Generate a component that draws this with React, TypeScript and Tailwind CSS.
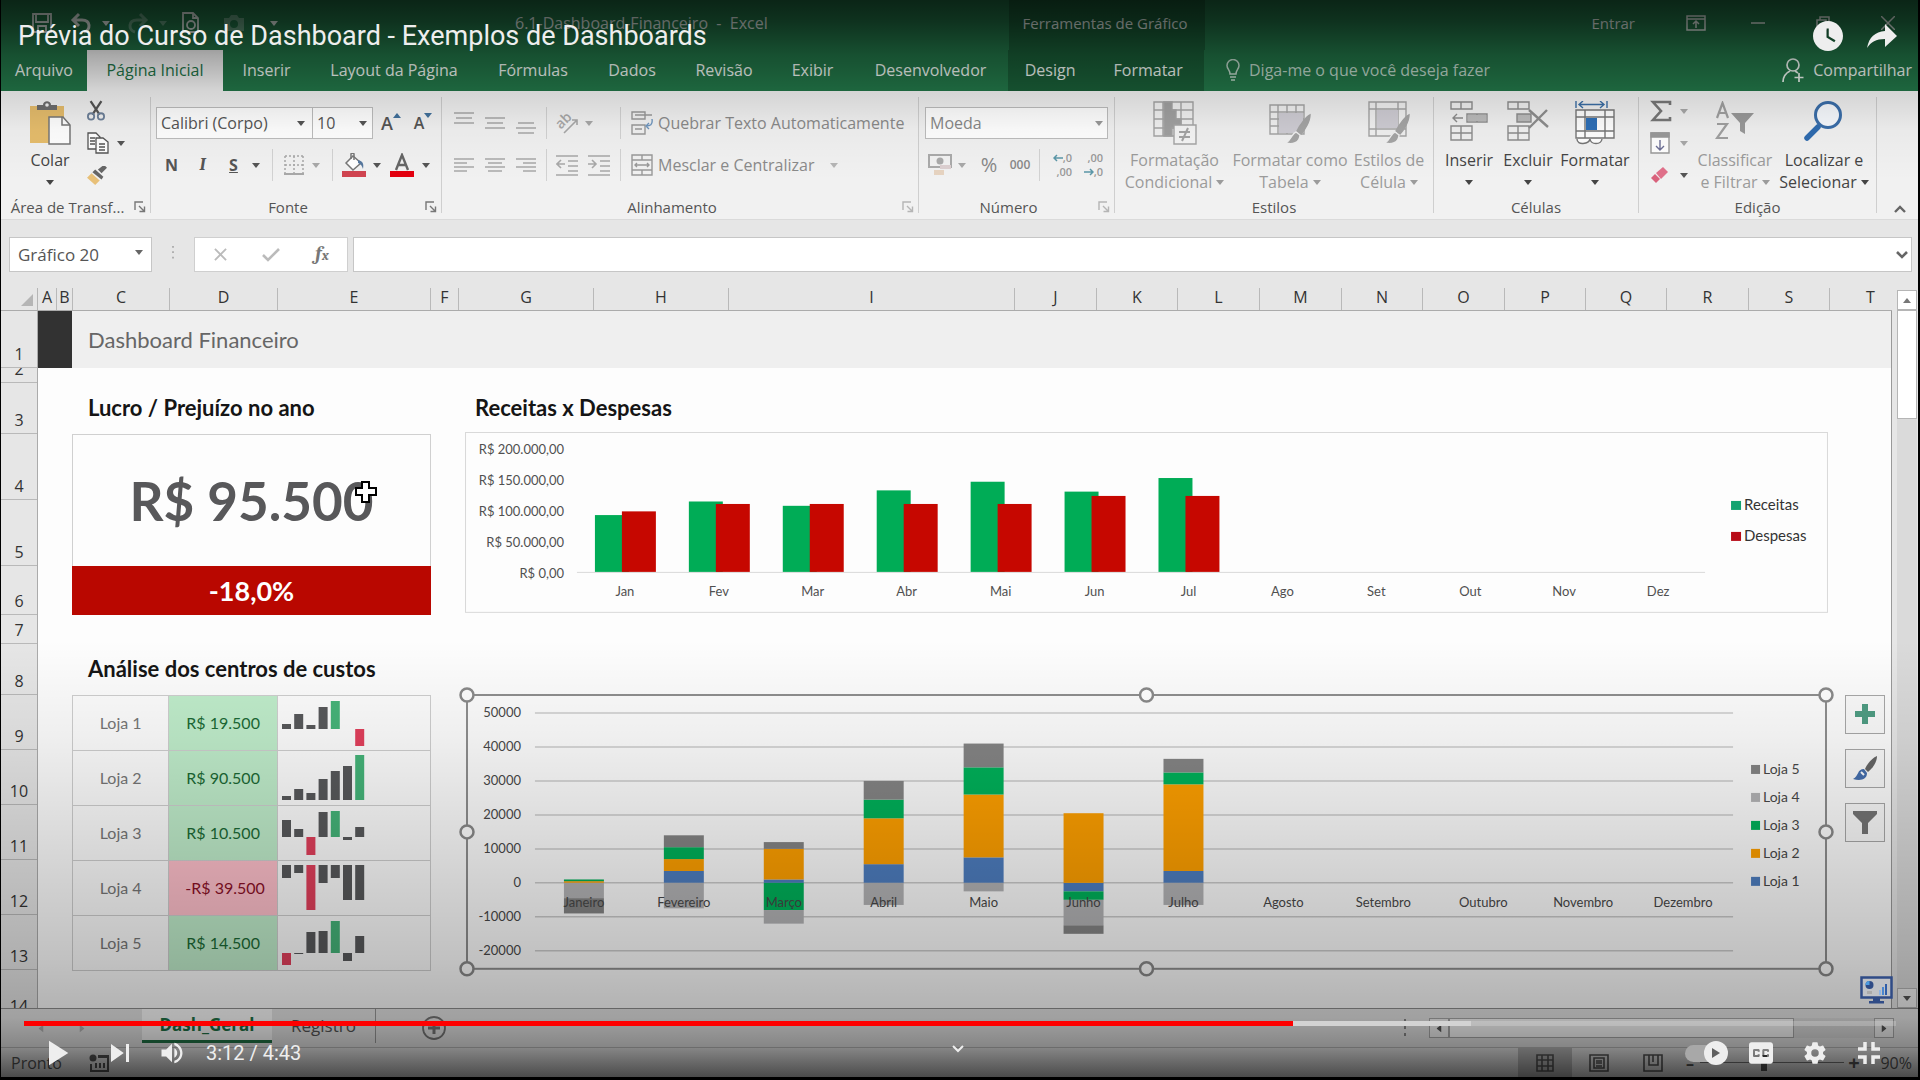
import type { ReactNode } from 'react';
import { IoSettingsSharp } from 'react-icons/io5';
import { MdClosedCaption, MdPlayArrow, MdSkipNext, MdVolumeUp, MdWatchLater } from 'react-icons/md';

const tabs = [
  { name: 'Arquivo', width: 'w-[86px]' },
  { name: 'Página Inicial', width: 'w-[136px]', active: true },
  { name: 'Inserir', width: 'w-[87px]' },
  { name: 'Layout da Página', width: 'w-[168px]' },
  { name: 'Fórmulas', width: 'w-[110px]' },
  { name: 'Dados', width: 'w-[88px]' },
  { name: 'Revisão', width: 'w-[96px]' },
  { name: 'Exibir', width: 'w-[81px]' },
  { name: 'Desenvolvedor', width: 'w-[155px]' },
];

const columns = [
  { name: 'A', width: 'w-[19px]' },
  { name: 'B', width: 'w-[16px]' },
  { name: 'C', width: 'w-[97px]' },
  { name: 'D', width: 'w-[108px]' },
  { name: 'E', width: 'w-[153px]' },
  { name: 'F', width: 'w-[28px]' },
  { name: 'G', width: 'w-[135px]' },
  { name: 'H', width: 'w-[135px]' },
  { name: 'I', width: 'w-[286px]' },
  { name: 'J', width: 'w-[82px]' },
  { name: 'K', width: 'w-[81px]' },
  { name: 'L', width: 'w-[82px]' },
  { name: 'M', width: 'w-[82px]' },
  { name: 'N', width: 'w-[81px]' },
  { name: 'O', width: 'w-[82px]' },
  { name: 'P', width: 'w-[81px]' },
  { name: 'Q', width: 'w-[81px]' },
  { name: 'R', width: 'w-[82px]' },
  { name: 'S', width: 'w-[81px]' },
];

const rows = [
  { n: 1, height: 'h-[57px]' },
  { n: 2, height: 'h-[15px]' },
  { n: 3, height: 'h-[51px]' },
  { n: 4, height: 'h-[66px]' },
  { n: 5, height: 'h-[66px]' },
  { n: 6, height: 'h-[49px]' },
  { n: 7, height: 'h-[29px]' },
  { n: 8, height: 'h-[51px]' },
  { n: 9, height: 'h-[55px]' },
  { n: 10, height: 'h-[55px]' },
  { n: 11, height: 'h-[55px]' },
  { n: 12, height: 'h-[55px]' },
  { n: 13, height: 'h-[55px]' },
];

const stores = [
  { name: 'Loja 1', value: 'R$ 19.500', base: 33, trend: [5, 15, 4, 22, 28, 0, -17] },
  { name: 'Loja 2', value: 'R$ 90.500', base: 49, trend: [4, 11, 7, 21, 29, 34, 45] },
  { name: 'Loja 3', value: 'R$ 10.500', base: 31, trend: [17, 8, -18, 25, 26, -3, 10] },
  { name: 'Loja 4', value: '-R$ 39.500', base: 4, trend: [-13, -8, -45, -18, -13, -35, -35] },
  { name: 'Loja 5', value: 'R$ 14.500', base: 37, trend: [-12, -1, 21, 22, 32, -8, 17] },
];

const shortMonths = ['Jan', 'Fev', 'Mar', 'Abr', 'Mai', 'Jun', 'Jul', 'Ago', 'Set', 'Out', 'Nov', 'Dez'];
const longMonths = ['Janeiro', 'Fevereiro', 'Março', 'Abril', 'Maio', 'Junho', 'Julho', 'Agosto', 'Setembro', 'Outubro', 'Novembro', 'Dezembro'];

// thousands of reais
const income = [92, 114, 107, 132, 146, 130, 152];
const expenses = [98, 110, 110, 110, 110, 123, 123];

const storeColors = ['#4e7ec0', '#ffa000', '#00b25a', '#b4b4b6', '#858585'];
const monthly = [
  [0, 500, 500, -4500, -4500],
  [3500, 3500, 3500, -7500, 3500],
  [1000, 9000, -8000, -4000, 2000],
  [5500, 13500, 5500, -6500, 5500],
  [7500, 18500, 8000, -2500, 7000],
  [-2500, 20500, -2500, -7500, -2500],
  [3500, 25500, 3500, -6500, 4000],
];

function Caret({ className = '' }: { className?: string }) {
  return (
    <svg viewBox="0 0 8 5" className={'w-2 h-[5px] shrink-0 ' + className} fill="currentColor">
      <path d="M0 0h8L4 5z" />
    </svg>
  );
}

function Group({ label, width, launcher, muted, children }: { label: string; width: string; launcher?: boolean; muted?: boolean; children: ReactNode }) {
  return (
    <section className={'flex shrink-0 ' + width}>
      <div className="flex flex-col flex-1 min-w-0">
        <div className="h-[106px] flex">{children}</div>
        <div className="flex items-center h-6 text-[15px]">
          <span className="flex-1 text-center text-[#555] whitespace-nowrap">{label}</span>
          {launcher && (
            <button aria-label={'Opções de ' + label} className={'w-4 ' + (muted ? 'text-[#b5b5b5]' : 'text-[#777]')}>
              <svg viewBox="0 0 12 12" className="w-3 h-3" fill="none" stroke="currentColor" strokeWidth="1.4">
                <path d="M1 9V1h8M5 5l5 5M10.500 5.500v5h-5" />
              </svg>
            </button>
          )}
        </div>
      </div>
      <div className="w-px my-[6px] bg-[#cfcfcf]" />
    </section>
  );
}

function BigButton({ lines, width, muted, caretBelow, icon }: { lines: string[]; width: string; muted?: boolean; caretBelow?: boolean; icon: ReactNode }) {
  return (
    <button className={'flex flex-col items-center shrink-0 pt-2 ' + width + (muted ? ' text-[#9b9b9b]' : ' text-[#444]')}>
      <span className="h-[50px] flex items-start justify-center pt-[2px]">{icon}</span>
      <span className="h-[22px] leading-[22px] whitespace-nowrap">{lines[0]}</span>
      <span className="h-[22px] leading-[22px] flex items-center gap-1 whitespace-nowrap">
        {lines[1]}
        {(caretBelow || lines[1]) && <Caret />}
      </span>
    </button>
  );
}

function Divider({ width }: { width: string }) {
  return <div className={'flex justify-center h-8 shrink-0 ' + width}><div className="w-px bg-[#d2d2d2]" /></div>;
}

function Tool({ label, width, muted, children }: { label: string; width: string; muted?: boolean; children: ReactNode }) {
  return (
    <button aria-label={label} className={'flex items-center justify-center h-8 shrink-0 ' + width + (muted ? ' text-[#a8a8a8]' : ' text-[#555]')}>
      {children}
    </button>
  );
}

function Lines({ d }: { d: string }) {
  return (
    <svg viewBox="0 0 22 22" className="w-[22px] h-[22px]" fill="none" stroke="currentColor" strokeWidth="1.6">
      <path d={d} />
    </svg>
  );
}

function TitleBar() {
  return (
    <div className="flex h-[50px] bg-[#217346] text-[#dfe9e3] text-[15px]">
      <div className="w-[514px] flex items-center h-[46px] pl-[30px] gap-[13px]">
        <svg viewBox="0 0 22 22" className="w-[22px] h-[22px]" fill="none" stroke="currentColor" strokeWidth="1.8"><path d="M2 2h18v18H2zM5 2v8h12V2M7 20v-6h8v6" /></svg>
        <div className="flex items-center gap-[10px] ml-1">
          <svg viewBox="0 0 22 22" className="w-[22px] h-[22px]" fill="none" stroke="currentColor" strokeWidth="3"><path d="M9 2L3 8l6 6M3 8h9c9 0 9 10 2 12" /></svg>
          <Caret />
        </div>
        <div className="flex items-center gap-[10px] opacity-35 ml-1">
          <svg viewBox="0 0 22 22" className="w-[22px] h-[22px]" fill="none" stroke="currentColor" strokeWidth="3"><path d="M13 2l6 6-6 6M19 8h-9C1 8 1 18 8 20" /></svg>
          <Caret />
        </div>
        <svg viewBox="0 0 22 22" className="w-[22px] h-[22px] mr-1" fill="none" stroke="currentColor" strokeWidth="1.8"><path d="M3 20V1h10l5 5v14zM13 1v5h5" /><circle cx="11" cy="13" r="4" /></svg>
        <svg viewBox="0 0 22 18" className="w-[22px] h-[18px] ml-1 opacity-35" fill="currentColor"><path d="M1 4h5l2-3h6l2 3h5v13H1zM11 6a4 4 0 100 8 4 4 0 000-8z" fillRule="evenodd" /></svg>
        <Caret className="ml-3" />
      </div>
      <div className="flex-1 flex items-center h-[46px] text-base whitespace-nowrap">6.1-Dashboard-Financeiro&nbsp; - &nbsp;Excel</div>
      <div className="w-[196px] bg-[#185a35] flex items-center justify-center h-[50px] pb-1 pr-1">Ferramentas de Gráfico</div>
      <div className="w-[713px] flex items-center justify-end h-[46px] pr-[23px]">
        <button className="mr-[51px]">Entrar</button>
        <button aria-label="Opções da faixa" className="w-[65px]"><svg viewBox="0 0 20 16" className="w-5 h-4" fill="none" stroke="currentColor" strokeWidth="1.5"><path d="M1 1h18v14H1zM1 4h18M10 13V7M7 9l3-3 3 3" /></svg></button>
        <button aria-label="Minimizar" className="w-[65px]"><svg viewBox="0 0 14 14" className="w-[14px] h-[14px]" stroke="currentColor" strokeWidth="1.5"><path d="M0 7h14" /></svg></button>
        <button aria-label="Restaurar" className="w-[65px]"><svg viewBox="0 0 14 14" className="w-[14px] h-[14px]" fill="none" stroke="currentColor" strokeWidth="1.5"><path d="M1 4h9v9H1zM4 4V1h9v9h-3" /></svg></button>
        <button aria-label="Fechar"><svg viewBox="0 0 14 14" className="w-[14px] h-[14px]" stroke="currentColor" strokeWidth="1.5"><path d="M0 0l14 14M14 0L0 14" /></svg></button>
      </div>
    </div>
  );
}

function TabBar() {
  return (
    <div className="flex h-[41px] bg-[#217346] text-[#e9f1ec]">
      {tabs.map(t => (
        <button key={t.name} className={'h-full pb-[2px] whitespace-nowrap shrink-0 ' + t.width + (t.active ? ' bg-[#f1f1f1] text-[#217346]' : '')}>{t.name}</button>
      ))}
      <div className="flex w-[196px] pb-[2px] bg-[#185a35] shrink-0">
        <button className="w-[86px]">Design</button>
        <button className="w-[114px]">Formatar</button>
      </div>
      <label className="flex items-center flex-1 pl-[22px] pb-[2px] gap-[9px] text-[#b9d2c4]">
        <svg viewBox="0 0 14 22" className="w-[14px] h-[22px]" fill="none" stroke="currentColor" strokeWidth="1.5"><path d="M4 15c0-4-3-5-3-8.500a6 6 0 0112 0C13 10 10 11 10 15zM4 18h6M5 21h4" /></svg>
        <input placeholder="Diga-me o que você deseja fazer" className="flex-1 bg-transparent outline-none placeholder:text-[#b9d2c4]" />
      </label>
      <button className="flex items-center gap-[9px] pr-[6px] pb-[2px]">
        <svg viewBox="0 0 22 26" className="w-[22px] h-[26px]" fill="none" stroke="currentColor" strokeWidth="1.7"><circle cx="11" cy="8" r="6" /><path d="M1 25c0-6 3-9 7-11M13 14l3 2M17 16v9M12.500 20.500h9" /></svg>
        Compartilhar
      </button>
    </div>
  );
}

const brush = (
  <g>
    <path d="M42 14c-4 2-11 11-13 16l4 3c4-4 9-13 9-19z" fill="#a5a5a5" />
    <path d="M28 31c-4 1-4 7-10 11 6 2 14 0 14-8z" fill="#a5a5a5" stroke="#f1f1f1" />
  </g>
);

function Ribbon() {
  return (
    <div className="flex h-[129px] bg-[#f1f1f1] border-b border-[#dadada]">
      <Group label="Área de Transf..." width="w-[150px]" launcher>
        <div className="pl-3">
          <BigButton
            lines={['Colar', '']}
            width="w-[74px]"
            caretBelow
            icon={
              <svg viewBox="0 0 42 44" className="w-[42px] h-11">
                <path d="M1 5h34v37H1z" fill="#e6bd6c" />
                <path d="M8 9V4h6c0-5 8-5 8 0h6v5z" fill="#6d6d6d" />
                <circle cx="18" cy="4" r="1.800" fill="#f1f1f1" />
                <path d="M20 16h14l7 8v19H20z" fill="#fff" stroke="#777" strokeWidth="1.500" />
                <path d="M33 16v8h8" fill="none" stroke="#777" strokeWidth="1.500" />
              </svg>
            }
          />
        </div>
        <div className="flex flex-col pt-1">
          <Tool label="Recortar" width="w-[18px]">
            <svg viewBox="0 0 20 24" className="w-5 h-6" fill="none" stroke="currentColor" strokeWidth="2"><path d="M4 1l10 15M16 1L6 16" strokeWidth="2.500" /><circle cx="4.500" cy="18" r="3.500" stroke="#6d8099" /><circle cx="15.500" cy="18" r="3.500" stroke="#6d8099" /></svg>
          </Tool>
          <Tool label="Copiar" width="w-[38px]">
            <svg viewBox="0 0 22 22" className="w-[22px] h-[22px] mr-2" fill="#fff" stroke="currentColor" strokeWidth="1.300"><path d="M1 1h8l4 4v12H1zM3 6h5M3 9h5M3 12h5" /><path d="M9 6h7l5 4v11H9zM12 12h6M12 15h6M12 18h6" /></svg>
            <Caret />
          </Tool>
          <Tool label="Pincel de formatação" width="w-[20px]">
            <svg viewBox="0 0 22 22" className="w-[22px] h-[22px]"><path d="M20 1l2 2-6 6-4-4 5-4z" fill="#666" /><path d="M9 5l9 8-2 3L6 8z" fill="#666" /><path d="M5 9l9 8-5 5-9-8z" fill="#e8c078" /></svg>
          </Tool>
        </div>
      </Group>

      <Group label="Fonte" width="w-[291px]" launcher>
        <div className="flex flex-col pl-[5px] pt-4 gap-[10px]">
          <div className="flex">
            <span className="relative flex items-center">
              <select aria-label="Fonte" className="appearance-none w-[157px] h-8 bg-white border border-[#bdbdbd] pl-1 text-[#555]"><option>Calibri (Corpo)</option></select>
              <Caret className="absolute right-2 text-[#555]" />
            </span>
            <span className="relative flex items-center">
              <select aria-label="Tamanho da fonte" className="appearance-none w-[60px] h-8 bg-white border border-l-0 border-[#bdbdbd] pl-1 text-[#555]"><option>10</option></select>
              <Caret className="absolute right-[6px] text-[#555]" />
            </span>
            <Tool label="Aumentar fonte" width="w-[36px]"><span className="text-lg font-semibold">A</span><Caret className="rotate-180 mb-4 text-[#41719c]" /></Tool>
            <Tool label="Diminuir fonte" width="w-[28px]"><span className="text-base font-semibold">A</span><Caret className="mb-4 text-[#41719c]" /></Tool>
          </div>
          <div className="flex">
            <Tool label="Negrito" width="w-[31px]"><b>N</b></Tool>
            <Tool label="Itálico" width="w-[31px]"><i className="font-serif font-bold text-lg">I</i></Tool>
            <Tool label="Sublinhado" width="w-[31px]"><b className="underline">S</b></Tool>
            <Tool label="Tipo de sublinhado" width="w-[14px]"><Caret /></Tool>
            <Divider width="w-[18px]" />
            <Tool label="Bordas" width="w-[26px]" muted>
              <svg viewBox="0 0 20 20" className="w-5 h-5" fill="none" stroke="currentColor" strokeWidth="1.500"><path d="M1 1h18M1 1v18M19 1v18M10 1v18M1 10h18" strokeDasharray="2 2" /><path d="M0 19h20" strokeWidth="2" /></svg>
            </Tool>
            <Tool label="Tipo de borda" width="w-[18px]" muted><Caret /></Tool>
            <Divider width="w-[14px]" />
            <Tool label="Cor de preenchimento" width="w-[30px]">
              <svg viewBox="0 0 24 24" className="w-6 h-6"><path d="M4 10l7-7 8 7-8 7z" fill="#fff" stroke="#777" strokeWidth="1.500" /><path d="M9 6V1c0-1 3-1 3 0v6" fill="none" stroke="#777" strokeWidth="1.500" /><path d="M16 7c5 1 6 4 5 9-1-3-2-5-5-6z" fill="#56779e" /><path d="M0 18h24v6H0z" fill="#d04450" /></svg>
            </Tool>
            <Tool label="Cores de preenchimento" width="w-[16px]"><Caret /></Tool>
            <Tool label="Cor da fonte" width="w-[33px]">
              <svg viewBox="0 0 24 24" className="w-6 h-6"><path d="M6 17l6-15 6 15M8 12h8" fill="none" stroke="#666" strokeWidth="2.400" /><path d="M0 18h24v6H0z" fill="#e3000f" /></svg>
            </Tool>
            <Tool label="Cores da fonte" width="w-[16px]"><Caret /></Tool>
          </div>
        </div>
      </Group>

      <Group label="Alinhamento" width="w-[477px]" launcher muted>
        <div className="flex flex-col pl-[6px] pt-4 gap-[10px]">
          <div className="flex">
            <Tool label="Alinhar acima" width="w-[31px]" muted><Lines d="M1 1h20M3 6h16M1 11h20" /></Tool>
            <Tool label="Alinhar no meio" width="w-[31px]" muted><Lines d="M1 6h20M3 11h16M1 16h20" /></Tool>
            <Tool label="Alinhar abaixo" width="w-[31px]" muted><Lines d="M3 11h16M1 16h20M3 21h16" /></Tool>
            <Divider width="w-[10px]" />
            <Tool label="Orientação" width="w-[31px]" muted>
              <svg viewBox="0 0 24 24" className="w-6 h-6 overflow-visible"><text x="9" y="14" fontSize="14" fontWeight="600" fill="currentColor" textAnchor="middle" transform="rotate(-45 9 10)">ab</text><path d="M9 22L22 9M17 9h5v5" fill="none" stroke="currentColor" strokeWidth="1.600" /></svg>
            </Tool>
            <Tool label="Opções de orientação" width="w-[14px]" muted><Caret /></Tool>
            <div className="w-[19px]" />
            <Divider width="w-[10px]" />
            <button className="flex items-center h-8 pl-[6px] gap-[5px] text-[#8a8a8a] whitespace-nowrap">
              <svg viewBox="0 0 22 24" className="w-[22px] h-6" fill="none" stroke="#999" strokeWidth="1.400"><path d="M1 1h13v7H1zM1 14h13v9H1zM4 18h7M4 4h17" /><path d="M21 8c1 6-2 7-6 7M18 12l-3 3 3 3" stroke="#6f96bf" /></svg>
              Quebrar Texto Automaticamente
            </button>
          </div>
          <div className="flex">
            <Tool label="Alinhar à esquerda" width="w-[31px]" muted><Lines d="M1 5h20M1 9h13M1 13h20M1 17h13" /></Tool>
            <Tool label="Centralizar" width="w-[31px]" muted><Lines d="M1 5h20M4 9h14M1 13h20M4 17h14" /></Tool>
            <Tool label="Alinhar à direita" width="w-[31px]" muted><Lines d="M1 5h20M8 9h13M1 13h20M8 17h13" /></Tool>
            <Divider width="w-[10px]" />
            <Tool label="Diminuir recuo" width="w-[32px]" muted><Lines d="M0 2h22M12 7h10M12 12h10M12 17h10M0 21h22M9 10H1M5 6l-4 4 4 4" /></Tool>
            <Tool label="Aumentar recuo" width="w-[32px]" muted><Lines d="M0 2h22M12 7h10M12 12h10M12 17h10M0 21h22M0 10h8M4 6l4 4-4 4" /></Tool>
            <Divider width="w-[10px]" />
            <button className="flex items-center h-8 pl-[6px] gap-[5px] text-[#8a8a8a] whitespace-nowrap">
              <svg viewBox="0 0 22 22" className="w-[22px] h-[22px]" fill="none" stroke="#999" strokeWidth="1.400"><path d="M1 1h20v20H1zM1 6h20M1 16h20M11 1v5M11 16v5M4 11h14M6 9l-2 2 2 2M16 9l2 2-2 2" /></svg>
              Mesclar e Centralizar
              <Caret className="ml-[11px] text-[#b5b5b5]" />
            </button>
          </div>
        </div>
      </Group>

      <Group label="Número" width="w-[196px]" launcher muted>
        <div className="flex flex-col pl-[6px] pt-4 gap-[10px]">
          <span className="relative flex items-center">
            <select aria-label="Formato de número" className="appearance-none w-[183px] h-8 bg-white border border-[#bdbdbd] pl-1 text-[#888]"><option>Moeda</option></select>
            <Caret className="absolute right-[6px] text-[#999]" />
          </span>
          <div className="flex">
            <Tool label="Formato de contabilização" width="w-[30px]" muted>
              <svg viewBox="0 0 24 24" className="w-6 h-6"><path d="M1 2h22v12H1z" fill="none" stroke="#aaa" strokeWidth="2" /><circle cx="12" cy="8" r="3.500" fill="#aaa" /><path d="M12 12h11v4H12z" fill="#dccfd0" /><path d="M6 17h10v5H6z" fill="#e6d3c0" /></svg>
            </Tool>
            <Tool label="Moedas" width="w-[14px]" muted><Caret /></Tool>
            <Tool label="Porcentagem" width="w-[40px]" muted><span className="text-xl text-[#888]">%</span></Tool>
            <Tool label="Separador de milhares" width="w-[22px]" muted><span className="text-xs font-semibold text-[#888]">000</span></Tool>
            <Divider width="w-[16px]" />
            <Tool label="Aumentar casas" width="w-[31px]" muted>
              <span className="flex flex-col items-end text-[11px] leading-[14px] font-semibold text-[#999]">
                <span className="flex items-center"><svg viewBox="0 0 10 8" className="w-[10px] h-2" fill="none" stroke="#5b97a8" strokeWidth="1.500"><path d="M10 4H1M4 1L1 4l3 3" /></svg>,0</span>
                <span>,00</span>
              </span>
            </Tool>
            <Tool label="Diminuir casas" width="w-[31px]" muted>
              <span className="flex flex-col items-end text-[11px] leading-[14px] font-semibold text-[#999]">
                <span>,00</span>
                <span className="flex items-center"><svg viewBox="0 0 10 8" className="w-[10px] h-2" fill="none" stroke="#5b97a8" strokeWidth="1.500"><path d="M0 4h9M6 1l3 3-3 3" /></svg>,0</span>
              </span>
            </Tool>
          </div>
        </div>
      </Group>

      <Group label="Estilos" width="w-[319px]">
        <BigButton
          lines={['Formatação', 'Condicional']}
          width="w-[119px]"
          muted
          icon={
            <svg viewBox="0 0 44 44" className="w-11 h-11" fill="none" stroke="#a5a5a5" strokeWidth="1.400">
              <path d="M1 1h39v34H1zM1 9h39M1 18h39M1 27h39M10 1v34M28 1v34" />
              <path d="M11 1h8v8h4v9h5v9h-9v8h-8z" fill="#a0a0a0" />
              <path d="M21 24h22v19H21z" fill="#f5f5f5" /><path d="M26 31h11M26 36h11M35 27l-6 13" strokeWidth="2" />
            </svg>
          }
        />
        <BigButton
          lines={['Formatar como', 'Tabela']}
          width="w-[112px]"
          muted
          icon={
            <svg viewBox="0 0 44 44" className="w-11 h-11" fill="none" stroke="#a5a5a5" strokeWidth="1.400">
              <path d="M2 4h34v29H2zM2 11h34M2 18h34M2 25h34M10 4v29M19 4v29M28 4v29" />
              <path d="M11 12h24v20H11z" fill="#cfcdd4" stroke="none" />
              {brush}
            </svg>
          }
        />
        <BigButton
          lines={['Estilos de', 'Célula']}
          width="w-[86px]"
          muted
          icon={
            <svg viewBox="0 0 44 44" className="w-11 h-11" fill="none" stroke="#a5a5a5" strokeWidth="1.400">
              <path d="M2 1h37v34H2zM2 8h37M2 28h37M9 1v34M31 1v34" />
              <path d="M10 9h21v18H10z" fill="#cfcdd4" stroke="none" />
              {brush}
            </svg>
          }
        />
      </Group>

      <Group label="Células" width="w-[205px]">
        <div className="flex pl-[5px]">
          <BigButton
            lines={['Inserir', '']}
            width="w-[60px]"
            caretBelow
            icon={
              <svg viewBox="0 0 38 40" className="w-[38px] h-10" fill="none" stroke="#8d8d8d" strokeWidth="1.400">
                <path d="M1 1h21v7H1zM11 1v7M17 13h20v8H17zM27 13v8M1 25h21v14H1zM1 32h21M11 25v14M13 17H3M7 13l-4 4 4 4" />
                <path d="M18 14h18v6H18z" fill="#bbb" stroke="none" />
              </svg>
            }
          />
          <BigButton
            lines={['Excluir', '']}
            width="w-[58px]"
            caretBelow
            icon={
              <svg viewBox="0 0 42 40" className="w-[42px] h-10" fill="none" stroke="#8d8d8d" strokeWidth="1.400">
                <path d="M1 1h21v7H1zM11 1v7M1 25h21v14H1zM1 32h21M11 25v14" />
                <path d="M10 13h14v8H10z" fill="#bbb" />
                <path d="M22 9l19 17M40 9L22 27" strokeWidth="2.400" />
              </svg>
            }
          />
          <BigButton
            lines={['Formatar', '']}
            width="w-[76px]"
            caretBelow
            icon={
              <svg viewBox="0 0 42 44" className="w-[42px] h-11" fill="none" stroke="#777" strokeWidth="1.400">
                <path d="M2 9h38v28H2zM2 16h38M2 30h38M11 9v28M31 9v28" fill="#fff" />
                <path d="M12 17h11v12H12z" fill="#2e6fb7" stroke="none" />
                <path d="M2 0v7M33 0v7M5 3.500h25M9 0L5 3.500 9 7M26 0l4 3.500L26 7" stroke="#3b6ea5" />
                <path d="M3 38c0 7 12 5 13 0 1 6 11 6 12 0" fill="#fff" />
              </svg>
            }
          />
        </div>
      </Group>

      <Group label="Edição" width="w-[238px]">
        <div className="flex flex-col pl-2 pt-1 w-[54px] shrink-0">
          <Tool label="AutoSoma" width="w-[44px]">
            <svg viewBox="0 0 22 22" className="w-[22px] h-[22px] mr-2" fill="none" stroke="#777" strokeWidth="2.600"><path d="M20 5V2H3l8 9-8 9h17v-3" /></svg>
            <Caret className="text-[#a8a8a8]" />
          </Tool>
          <Tool label="Preencher" width="w-[44px]" muted>
            <svg viewBox="0 0 20 22" className="w-5 h-[22px] mr-[10px]" fill="#fff" stroke="#999" strokeWidth="1.400"><path d="M1 1h18v20H1z" /><path d="M1 1h18v4H1z" fill="#999" /><path d="M10 8v10M6 14l4 4 4-4" stroke="#6d6f96" fill="none" /></svg>
            <Caret />
          </Tool>
          <Tool label="Limpar" width="w-[44px]">
            <svg viewBox="0 0 18 18" className="w-[18px] h-[18px] mr-[11px]"><path d="M5 7l7-6 5 5-7 7z" fill="#e0708a" /><path d="M4 8l5 5-4 4-5-5z" fill="#d9627c" /></svg>
            <Caret />
          </Tool>
        </div>
        <BigButton
          lines={['Classificar', 'e Filtrar']}
          width="w-[84px]"
          muted
          icon={
            <svg viewBox="0 0 40 42" className="w-10 h-[42px]">
              <path d="M2 17L7.500 2 13 17M4 12h7M2 23h10L2 37h11" fill="none" stroke="#a0a0a0" strokeWidth="2.200" />
              <path d="M16 12h23l-9 10v11l-5-3V22z" fill="#999" />
            </svg>
          }
        />
        <BigButton
          lines={['Localizar e', 'Selecionar']}
          width="w-[94px]"
          icon={
            <svg viewBox="0 0 40 40" className="w-10 h-10"><path d="M14 26L3 37" stroke="#2f6cb0" strokeWidth="5.500" strokeLinecap="round" /><circle cx="24" cy="14" r="12.500" fill="#f8fbff" stroke="#3a6eaa" strokeWidth="3" /></svg>
          }
        />
      </Group>
      <button aria-label="Recolher faixa" className="flex flex-1 items-end justify-center pb-[6px] pl-1 text-[#666]">
        <svg viewBox="0 0 12 8" className="w-3 h-2" fill="none" stroke="currentColor" strokeWidth="2.400"><path d="M1 7l5-5 5 5" /></svg>
      </button>
    </div>
  );
}

function FormulaBar() {
  return (
    <div className="flex pt-[17px] pl-2 pr-[6px] h-[52px]">
      <span className="relative flex items-center">
        <input aria-label="Caixa de nome" defaultValue="Gráfico 20" className="w-[143px] h-[35px] bg-white border border-[#c6c6c6] pl-2 text-[17px] text-[#555]" />
        <Caret className="absolute right-2 mb-1 w-[10px] text-[#666]" />
      </span>
      <svg viewBox="0 0 4 20" className="w-[42px] h-[18px] mt-2" fill="#aaa"><path d="M1 1h2v2H1zM1 7h2v2H1zM1 13h2v2H1z" /></svg>
      <div className="flex items-center w-[154px] h-[35px] bg-white border border-[#cfcfcf] mr-[5px]">
        <button aria-label="Cancelar" className="w-[50px] flex justify-center"><svg viewBox="0 0 14 14" className="w-[15px] h-[13px]" stroke="#bbb" strokeWidth="2"><path d="M1 1l12 12M13 1L1 13" /></svg></button>
        <button aria-label="Inserir" className="w-[52px] flex justify-center"><svg viewBox="0 0 18 14" className="w-[18px] h-[14px]" fill="none" stroke="#bbb" strokeWidth="2.600"><path d="M1 7l5 5L17 1" /></svg></button>
        <button aria-label="Inserir função" className="w-[50px] text-[#777] font-serif italic font-bold text-xl leading-5">f<span className="text-sm">x</span></button>
      </div>
      <span className="relative flex flex-1 items-center">
        <input aria-label="Barra de fórmulas" className="w-full h-[35px] bg-white border border-[#c6c6c6]" />
        <svg viewBox="0 0 12 8" className="absolute right-1 w-3 h-2" fill="none" stroke="#666" strokeWidth="2.600"><path d="M1 1l5 5 5-5" /></svg>
      </span>
    </div>
  );
}

function IncomeChart() {
  const y = (v: number) => 140 - v * 0.618;
  return (
    <svg viewBox="0 0 1364 181" className="w-full h-auto block" fontSize="13" fill="#505050">
      <rect x="0.5" y="0.5" width="1363" height="180" fill="#fdfdfd" stroke="#d9d9d9" />
      {['200.000,00', '150.000,00', '100.000,00', '50.000,00', '0,00'].map((v, i) => (
        <text key={v} x="99" y={22 + i * 31} textAnchor="end">R$ {v}</text>
      ))}
      <path d="M112 140.500H1241" stroke="#d9d9d9" />
      {shortMonths.map((m, i) => (
        <g key={m}>
          {income[i] && <rect x={130 + i * 94} y={y(income[i])} width="34" height={140 - y(income[i])} fill="#00ac56" />}
          {expenses[i] && <rect x={157 + i * 94} y={y(expenses[i])} width="34" height={140 - y(expenses[i])} fill="#c60700" />}
          <text x={160 + i * 94} y="164" textAnchor="middle">{m}</text>
        </g>
      ))}
      <rect x="1267" y="69" width="10" height="9" fill="#12a370" />
      <text x="1280" y="78" fontSize="15" fill="#333">Receitas</text>
      <rect x="1267" y="100" width="10" height="9" fill="#b80c18" />
      <text x="1280" y="109" fontSize="15" fill="#333">Despesas</text>
    </svg>
  );
}

function StoresChart() {
  const scale = 34 / 10000;
  const bars = monthly.flatMap((values, m) => {
    let up = 188;
    let down = 188;
    return values.map((v, s) => {
      const h = Math.abs(v) * scale;
      if (v >= 0) up -= h;
      const top = v >= 0 ? up : down;
      if (v < 0) down += h;
      return <rect key={m + '-' + s} x={97 + m * 100} y={top} width="40" height={h} fill={storeColors[s]} />;
    });
  });
  return (
    <svg viewBox="0 0 1360 274" className="w-full h-auto block overflow-visible" fontSize="13" fill="#484848">
      <rect x="0" y="0" width="1360" height="274" fill="none" stroke="#8f8f8f" strokeWidth="2" />
      {[50000, 40000, 30000, 20000, 10000, 0, -10000, -20000].map((v, i) => (
        <g key={v}>
          <path d={`M68 ${18 + i * 34}H1267`} stroke="#cccccc" strokeWidth="1.500" />
          <text x="54" y={22 + i * 34} textAnchor="end">{v}</text>
        </g>
      ))}
      {bars}
      {longMonths.map((m, i) => <text key={m} x={117 + i * 100} y="212" textAnchor="middle">{m}</text>)}
      {[5, 4, 3, 2, 1].map((n, i) => (
        <g key={n}>
          <rect x="1285" y={70 + i * 28} width="9" height="9" fill={storeColors[n - 1]} />
          <text x="1297" y={79 + i * 28} fontSize="14">Loja {n}</text>
        </g>
      ))}
      {[[0, 0], [680, 0], [1360, 0], [0, 137], [1360, 137], [0, 274], [680, 274], [1360, 274]].map(([x, y]) => (
        <circle key={x + '-' + y} cx={x} cy={y} r="6.500" fill="#fff" stroke="#8a8a8a" strokeWidth="2.500" />
      ))}
    </svg>
  );
}

function Sparkline({ base, trend }: { base: number; trend: number[] }) {
  const max = Math.max(...trend);
  const min = Math.min(...trend);
  return (
    <svg viewBox="0 0 152 54" className="w-[152px] h-[54px] block">
      {trend.map((v, i) => {
        let fill = '#58595b';
        if (v === max && max > 0) fill = '#45b479';
        if (v === min && min < 0) fill = '#e2405c';
        return <rect key={i} x={4 + i * 12.2} y={v > 0 ? base - v : base} width="9" height={Math.abs(v)} fill={fill} />;
      })}
    </svg>
  );
}

function StoreTable() {
  return (
    <table className="w-[359px] border-collapse text-base text-[#777]">
      <tbody>
        {stores.map(s => {
          const negative = s.value.startsWith('-');
          return (
            <tr key={s.name} className="h-[55px]">
              <th scope="row" className="w-[97px] font-normal border border-[#cfcfcf] p-0">{s.name}</th>
              <td className={'w-[109px] text-center whitespace-nowrap border border-[#cfcfcf] p-0 ' + (negative ? 'bg-[#ffc0cb] text-[#8c1028] pl-1' : 'bg-[#c0edcb] text-[#1b6a35]')}>{s.value}</td>
              <td className="border border-[#cfcfcf] p-0"><Sparkline base={s.base} trend={s.trend} /></td>
            </tr>
          );
        })}
      </tbody>
    </table>
  );
}

function ChartButton({ label, children }: { label: string; children: ReactNode }) {
  return <button aria-label={label} className="flex items-center justify-center w-10 h-[39px] border border-[#a8a8a8] bg-[#fafafa]">{children}</button>;
}

function Sheet() {
  return (
    <div className="flex flex-1 min-h-0">
      <div className="flex flex-col flex-1 min-w-0">
        <div className="flex h-[39px] pt-4 border-b border-[#ababab] text-[#333] shrink-0">
          <div className="w-[37px] flex justify-end items-end pr-1 pb-1 border-r border-[#b5b5b5] shrink-0">
            <svg viewBox="0 0 12 12" className="w-3 h-3" fill="#b5b5b5"><path d="M12 0v12H0z" /></svg>
          </div>
          {columns.map(c => <div key={c.name} className={'text-center leading-[18px] border-r border-[#b9b9b9] shrink-0 ' + c.width}>{c.name}</div>)}
          <div className="flex-1 pl-[36px] leading-[18px]">T</div>
        </div>
        <div className="flex flex-1 min-h-0 overflow-hidden">
          <div className="w-[37px] shrink-0 border-r border-[#ababab] text-[#333]">
            {rows.map(r => <div key={r.n} className={'flex items-end justify-center border-b border-[#b9b9b9] overflow-hidden leading-[26px] ' + r.height}>{r.n}</div>)}
            <div className="text-center pt-6">14</div>
          </div>
          <div className="flex-1 min-w-0 bg-[#fdfdfd] font-['Lato',sans-serif] border-r border-[#999] overflow-hidden">
            <div className="flex h-[57px] bg-[#efefef]">
              <div className="w-[34px] bg-[#323232]" />
              <h1 className="pl-4 text-[22px] leading-[57px] text-[#666]">Dashboard Financeiro</h1>
            </div>
            <div className="flex pl-[34px] pr-[6px]">
              <div className="w-[359px] mr-[34px] shrink-0">
                <h2 className="h-[66px] pt-[26px] pl-4 text-[22px] leading-7 font-bold text-[#151515]">Lucro / Prejuízo no ano</h2>
                <div className="relative flex items-center justify-center h-[132px] border border-b-0 border-[#d0d0d0] text-[53px] font-bold text-[#58585a]">
                  R$ 95.500
                  <svg viewBox="0 0 22 22" className="absolute top-[46px] left-[282px] w-[22px] h-[22px]"><path d="M7 1h7v6h7v7h-7v7H7v-7H1V7h6z" fill="#fff" stroke="#000" strokeWidth="2" /></svg>
                </div>
                <div className="h-[49px] bg-[#b90700] text-white text-[27px] font-bold leading-[49px] text-center">-18,0%</div>
                <h2 className="h-[80px] pt-[40px] pl-4 text-[22px] leading-7 font-bold text-[#151515]">Análise dos centros de custos</h2>
                <StoreTable />
              </div>
              <div className="flex-1 min-w-0">
                <h2 className="h-[64px] pt-[26px] pl-[10px] text-[22px] leading-7 font-bold text-[#151515]">Receitas x Despesas</h2>
                <div className="pr-[57px]"><IncomeChart /></div>
                <div className="flex gap-[19px] pt-[82px] pl-[2px]">
                  <div className="flex-1 min-w-0"><StoresChart /></div>
                  <div className="flex flex-col gap-[15px]">
                    <ChartButton label="Elementos do gráfico"><svg viewBox="0 0 20 20" className="w-5 h-5" fill="#4f9d83"><path d="M7 0h6v7h7v6h-7v7H7v-7H0V7h7z" /></svg></ChartButton>
                    <ChartButton label="Estilos do gráfico"><svg viewBox="0 0 26 26" className="w-[26px] h-[26px]"><path d="M25 1C20 3 15 9 13 14l3 3c5-4 9-10 9-16z" fill="#666" /><path d="M12 14c-7 0-5 7-11 10 7 2 14 1 14-6z" fill="#456fae" /><path d="M9 17l3 3" stroke="#fff" strokeWidth="2" /></svg></ChartButton>
                    <ChartButton label="Filtros do gráfico"><svg viewBox="0 0 24 24" className="w-6 h-6" fill="#757575"><path d="M0 1h24v3l-9 9v11h-6V13L0 4z" /></svg></ChartButton>
                  </div>
                </div>
              </div>
            </div>
          </div>
        </div>
      </div>
      <div className="w-[26px] flex flex-col items-start pt-[18px] pl-[5px] shrink-0">
        <button aria-label="Rolar para cima" className="w-5 h-5 bg-white border border-[#b5b5b5] flex items-center justify-center text-[#777]"><Caret className="rotate-180" /></button>
        <div className="w-5 flex-1 bg-[#dadada]"><div className="h-[109px] bg-white border border-[#b5b5b5]" /></div>
        <button aria-label="Rolar para baixo" className="w-5 h-5 bg-[#f1f1f1] border border-[#b5b5b5] flex items-center justify-center text-[#555]"><Caret /></button>
      </div>
    </div>
  );
}

function SheetTabs() {
  return (
    <div className="flex h-[39px] border-t border-[#8e8e8e] text-[17px] shrink-0">
      <div className="flex items-center w-[141px] pl-9 gap-[33px] text-[#b5b5b5]"><Caret className="rotate-90" /><Caret className="-rotate-90" /></div>
      <button className="w-[130px] h-[34px] bg-[#fdfdfd] border-b-[3px] border-[#217346] font-bold text-[#217346]">Dash_Geral</button>
      <button className="w-[104px] h-[34px] text-[#555] border-r border-[#999]">Registro</button>
      <button aria-label="Nova planilha" className="w-[116px] flex justify-center items-center"><svg viewBox="0 0 24 24" className="w-6 h-6" fill="none" stroke="#777" strokeWidth="1.800"><circle cx="12" cy="12" r="11" /><path d="M12 6v12M6 12h12" strokeWidth="3" /></svg></button>
      <div className="flex flex-1 justify-end pt-[9px] pr-6">
        <svg viewBox="0 0 4 20" className="w-1 h-5 mr-[22px]" fill="#888"><path d="M1 1h2v3H1zM1 8h2v3H1zM1 15h2v3H1z" /></svg>
        <button aria-label="Rolar para a esquerda" className="w-5 h-5 border border-[#aaa] bg-[#f4f4f4] flex items-center justify-center text-[#555]"><Caret className="rotate-90" /></button>
        <div className="w-[425px] h-5 bg-[#dcdcdc]"><div className="w-[345px] h-5 bg-[#fdfdfd] border border-[#aaa]" /></div>
        <button aria-label="Rolar para a direita" className="w-5 h-5 border border-[#aaa] bg-[#f4f4f4] flex items-center justify-center text-[#555]"><Caret className="-rotate-90" /></button>
      </div>
    </div>
  );
}

function StatusBar() {
  return (
    <div className="flex items-center h-[30px] pl-[10px] pr-[6px] bg-[#e9e9e9] border-t border-[#bbb] text-[#555] shrink-0">
      <span className="w-[78px]">Pronto</span>
      <svg viewBox="0 0 20 18" className="w-5 h-[18px]" fill="none" stroke="currentColor" strokeWidth="2"><circle cx="4" cy="4" r="3.500" fill="currentColor" stroke="none" /><path d="M9 2h10v15H2v-7M9 3h10M7 9v5M11 9v5M15 9v5" /></svg>
      <div className="flex-1" />
      <button aria-label="Normal" className="w-[54px] h-full bg-[#bcbcbc] flex items-center justify-center"><svg viewBox="0 0 18 18" className="w-[18px] h-[18px]" fill="none" stroke="currentColor" strokeWidth="1.600"><path d="M1 1h16v16H1zM1 6h16M1 12h16M6 1v16M12 1v16" /></svg></button>
      <button aria-label="Layout da página" className="w-[54px] flex justify-center"><svg viewBox="0 0 20 18" className="w-5 h-[18px]" fill="none" stroke="currentColor" strokeWidth="1.600"><path d="M1 1h18v16H1zM5 4h10v10H5zM7 7h6M7 9h6M7 12h6" /></svg></button>
      <button aria-label="Quebra de página" className="w-[54px] flex justify-center"><svg viewBox="0 0 20 18" className="w-5 h-[18px]" fill="none" stroke="currentColor" strokeWidth="1.600"><path d="M1 1h18v16H1zM6 1v10h9V1M10 1v7" /></svg></button>
      <span className="w-5 text-center font-bold">–</span>
      <input type="range" aria-label="Zoom" min="10" max="190" defaultValue="90" className="w-[144px] h-px appearance-none bg-[#777] [&::-webkit-slider-thumb]:appearance-none [&::-webkit-slider-thumb]:w-[6px] [&::-webkit-slider-thumb]:h-4 [&::-webkit-slider-thumb]:bg-[#555]" />
      <span className="w-5 text-center text-xl font-bold leading-5">+</span>
      <span className="w-[48px] text-right">90%</span>
    </div>
  );
}

function PlayerOverlay() {
  return (
    <div className="absolute inset-0 flex flex-col font-['Roboto',sans-serif] text-[#eeeeee]">
      <div className="absolute inset-x-0 top-0 h-[180px] pointer-events-none bg-[linear-gradient(to_bottom,rgba(0,0,0,0.68)_0,rgba(0,0,0,0.56)_22px,rgba(0,0,0,0.3)_55px,rgba(0,0,0,0.12)_90px,rgba(0,0,0,0.03)_130px,transparent)]" />
      <div className="absolute inset-x-0 bottom-0 h-[440px] pointer-events-none bg-[linear-gradient(to_top,rgba(0,0,0,0.7)_0,rgba(0,0,0,0.42)_33px,rgba(0,0,0,0.3)_62px,rgba(0,0,0,0.24)_120px,rgba(0,0,0,0.15)_230px,rgba(0,0,0,0.06)_340px,transparent)]" />
      <header className="relative flex items-center h-[72px] pl-[18px] pr-[23px]">
        <h1 className="flex-1 text-[27px] leading-none whitespace-nowrap">Prévia do Curso de Dashboard - Exemplos de Dashboards</h1>
        <button aria-label="Assistir mais tarde" className="mr-[21px]"><MdWatchLater className="w-9 h-9" /></button>
        <button aria-label="Compartilhar"><svg viewBox="0 0 30 24" className="w-[30px] h-6" fill="currentColor"><path d="M18 0l12 12-12 11v-8C9 15 4 18 0 24 2 13 8 8 18 7z" /></svg></button>
      </header>
      <div className="flex-1" />
      <div className="relative flex justify-end pr-[27px] pb-[17px]">
        <svg viewBox="0 0 33 28" className="w-[33px] h-7"><path d="M1.500 1.500h30v20h-30z" fill="#c0c2c6" stroke="#2f4b86" strokeWidth="2.500" /><path d="M13 22h7v3h4v2.500H9V25h4z" fill="#2f4b86" /><circle cx="9.500" cy="9" r="4" fill="#2f4b86" /><path d="M9.500 9V5a4 4 0 00-4 4z" fill="#4d9be0" /><path d="M7 15h5v3H7z" fill="#aaa" /><path d="M19 14h2v5h-2z" fill="#8fb5e5" /><path d="M22 11h2v8h-2z" fill="#4a86d0" /><path d="M25 8h2v11h-2z" fill="#2f5da8" /></svg>
      </div>
      <div className="relative px-6 flex">
        <input type="range" aria-label="Progresso do vídeo" min="0" max="283" defaultValue="192" className="w-full h-[5px] appearance-none bg-[linear-gradient(to_right,#ff0000_67.8%,#d3d3d3_67.8%,#d3d3d3_77.3%,rgba(255,255,255,0.2)_77.3%)] [&::-webkit-slider-thumb]:appearance-none [&::-webkit-slider-thumb]:w-0 [&::-webkit-slider-thumb]:h-0" />
      </div>
      <footer className="relative flex items-center h-[54px] pl-[35px] pr-10">
        <div className="flex flex-1 items-center">
          <button aria-label="Reproduzir"><MdPlayArrow className="w-[42px] h-[42px]" /></button>
          <button aria-label="Próximo" className="ml-[25px]"><MdSkipNext className="w-9 h-9" /></button>
          <button aria-label="Volume" className="ml-5"><MdVolumeUp className="w-7 h-7" /></button>
          <span className="ml-5 text-xl">3:12 / 4:43</span>
        </div>
        <button aria-label="Mais"><svg viewBox="0 0 12 8" className="w-3 h-2 mb-2" fill="none" stroke="currentColor" strokeWidth="2"><path d="M1 1l5 5 5-5" /></svg></button>
        <div className="flex flex-1 items-center justify-end">
          <label className="relative flex items-center w-[43px] h-6 mr-[17px]">
            <input type="checkbox" defaultChecked aria-label="Reprodução automática" className="appearance-none w-[38px] h-[17px] rounded-full bg-[#a8a8a8]" />
            <span className="absolute right-0 w-6 h-6 rounded-full bg-[#eeeeee] flex items-center justify-center"><svg viewBox="0 0 8 10" className="w-2 h-[10px]" fill="#606060"><path d="M0 0l8 5-8 5z" /></svg></span>
          </label>
          <button aria-label="Legendas" className="mr-[26px]"><MdClosedCaption className="w-8 h-8" /></button>
          <button aria-label="Configurações" className="mr-[31px]"><IoSettingsSharp className="w-6 h-6" /></button>
          <button aria-label="Sair da tela cheia"><svg viewBox="0 0 22 22" className="w-[22px] h-[22px]" fill="none" stroke="currentColor" strokeWidth="3.500"><path d="M7 0v7H0M15 0v7h7M7 22v-7H0M15 22v-7h7" /></svg></button>
        </div>
      </footer>
    </div>
  );
}

export default function App() {
  return (
    <div className="relative h-screen min-h-[720px] overflow-hidden bg-black">
      <div className="flex flex-col h-full pl-px pr-[2px] pb-[3px] font-['Open_Sans',sans-serif] text-base">
        <TitleBar />
        <TabBar />
        <Ribbon />
        <div className="flex flex-col flex-1 min-h-0 bg-[#e6e6e6]">
          <FormulaBar />
          <Sheet />
          <SheetTabs />
          <StatusBar />
        </div>
      </div>
      <PlayerOverlay />
    </div>
  );
}
